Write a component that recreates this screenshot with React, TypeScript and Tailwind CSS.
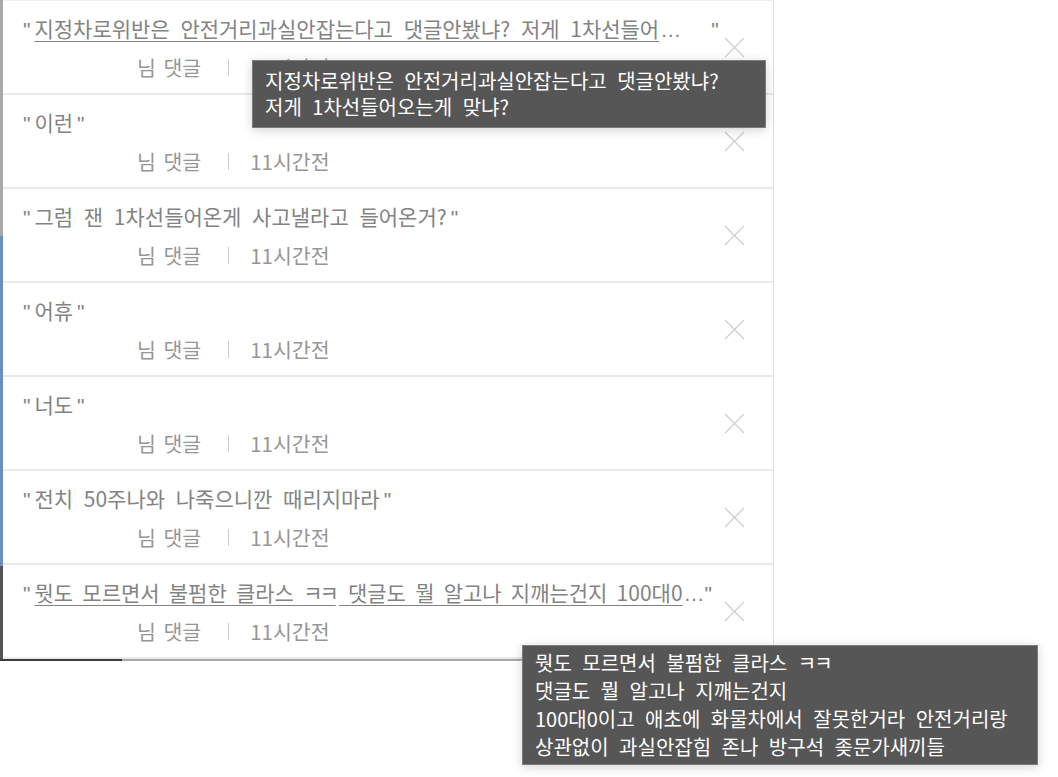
import React from "react";

type Row = { text: React.ReactNode; ws?: string };

const Close = () => (
  <svg width="21" height="21" viewBox="0 0 21 21" className="shrink-0">
    <path d="M1 1 L20 20 M20 1 L1 20" stroke="#cfcfcf" strokeWidth="1.3" fill="none" />
  </svg>
);

const Q = () => <span className="font-['Liberation_Sans']">"</span>;
const Dots = () => <span className="font-['Liberation_Sans'] ml-[1px]">…</span>;
const KK = () => <span className="tracking-[-3px] mr-[3px]">ㅋㅋ</span>;

const rows: Row[] = [
  {
    text: (
      <>
        <Q />
        <span className="ml-[4px] underline decoration-[1px] underline-offset-[4px]">
          지정차로위반은 안전거리과실안잡는다고 댓글안봤냐? 저게 1차선들어
        </span>
        <Dots />
        <span className="ml-[30px] font-['Liberation_Sans']">"</span>
      </>
    ),
  },
  { text: <><Q /><span className="ml-[4px]">이런</span><span className="ml-[4px] font-['Liberation_Sans']">"</span></> },
  {
    text: (
      <>
        <Q />
        <span className="ml-[4px]">그럼 잰 1차선들어온게 사고낼라고 들어온거?</span>
        <span className="ml-[4px] font-['Liberation_Sans']">"</span>
      </>
    ),
  },
  { text: <><Q /><span className="ml-[4px]">어휴</span><span className="ml-[4px] font-['Liberation_Sans']">"</span></> },
  { text: <><Q /><span className="ml-[4px]">너도</span><span className="ml-[4px] font-['Liberation_Sans']">"</span></> },
  {
    text: (
      <>
        <Q />
        <span className="ml-[4px]">전치 50주나와 나죽으니깐 때리지마라</span>
        <span className="ml-[4px] font-['Liberation_Sans']">"</span>
      </>
    ),
  },
  {
    ws: "[word-spacing:4.5px]",
    text: (
      <>
        <Q />
        <span className="ml-[4px] underline decoration-[1px] underline-offset-[4px]">
          뭣도 모르면서 불펌한 클라스 <KK /> 댓글도 뭘 알고나 지깨는건지 100대0
        </span>
        <Dots />
        <span className="font-['Liberation_Sans']">"</span>
      </>
    ),
  },
];

export default function App() {
  return (
    <div
      className="relative w-[1058px] h-[777px] bg-white overflow-hidden"
      style={{ fontFamily: '"Noto Sans CJK KR", "Noto Sans", sans-serif' }}
    >
      <div className="flex">
        <div className="w-[3px] h-[661px] flex flex-col bg-[#a8a8a8]">
          <div className="h-[236px]" />
          <div className="h-[330px] bg-[#6d8fc0]" />
          <div className="flex-1 bg-[#555]" />
        </div>
        <div className="w-[771px] bg-white border-r border-[#dcdcdc] border-t border-t-[#eeeeee]">
          {rows.map((r, i) => (
            <div
              key={i}
              className="h-[94px] border-b-2 border-[#e9e9e9] flex items-center pl-[20px] pr-[28px]"
            >
              <div className="flex-1 min-w-0 flex flex-col pt-[1px]">
                <div
                  className={
                    "h-[28px] leading-[28px] text-[21px] text-[#838383] whitespace-nowrap " +
                    (r.ws ? "[word-spacing:4.5px]" : "[word-spacing:6px]")
                  }
                >
                  {r.text}
                </div>
                <div className="mt-[11px] h-[28px] leading-[28px] text-[20.5px] text-[#969696] flex items-center pl-[114px] [word-spacing:3px]">
                  <span>님 댓글</span>
                  <span className="ml-[27px] w-[1px] h-[17px] bg-[#cccccc]" />
                  <span className="ml-[21px]">11시간전</span>
                </div>
              </div>
              <Close />
            </div>
          ))}
        </div>
      </div>
      <div className="flex h-[2px] -mt-[2px]">
        <div className="w-[122px] bg-[#3a3a3a]" />
        <div className="w-[652px] bg-[#a9a9a9]" />
      </div>

      <div className="absolute left-[252px] top-[60px] w-[514px] h-[68px] bg-[#565656] border border-[#7c7c7c] shadow-[0_2px_10px_rgba(0,0,0,0.18)] px-[12px] py-[7px] text-white text-[20px] leading-[26px] [word-spacing:6px] whitespace-nowrap">
        <div>지정차로위반은 안전거리과실안잡는다고 댓글안봤냐?</div>
        <div>저게 1차선들어오는게 맞냐?</div>
      </div>

      <div className="absolute left-[522px] top-[645px] w-[516px] h-[120px] bg-[#565656] border border-[#7c7c7c] shadow-[0_2px_10px_rgba(0,0,0,0.18)] px-[12px] py-[3px] text-white text-[20px] leading-[28px] [word-spacing:6px] whitespace-nowrap">
        <div>
          뭣도 모르면서 불펌한 클라스 <span className="tracking-[-2px]">ㅋㅋ</span>
        </div>
        <div>댓글도 뭘 알고나 지깨는건지</div>
        <div>100대0이고 애초에 화물차에서 잘못한거라 안전거리랑</div>
        <div>상관없이 과실안잡힘 존나 방구석 좆문가새끼들</div>
      </div>
    </div>
  );
}
